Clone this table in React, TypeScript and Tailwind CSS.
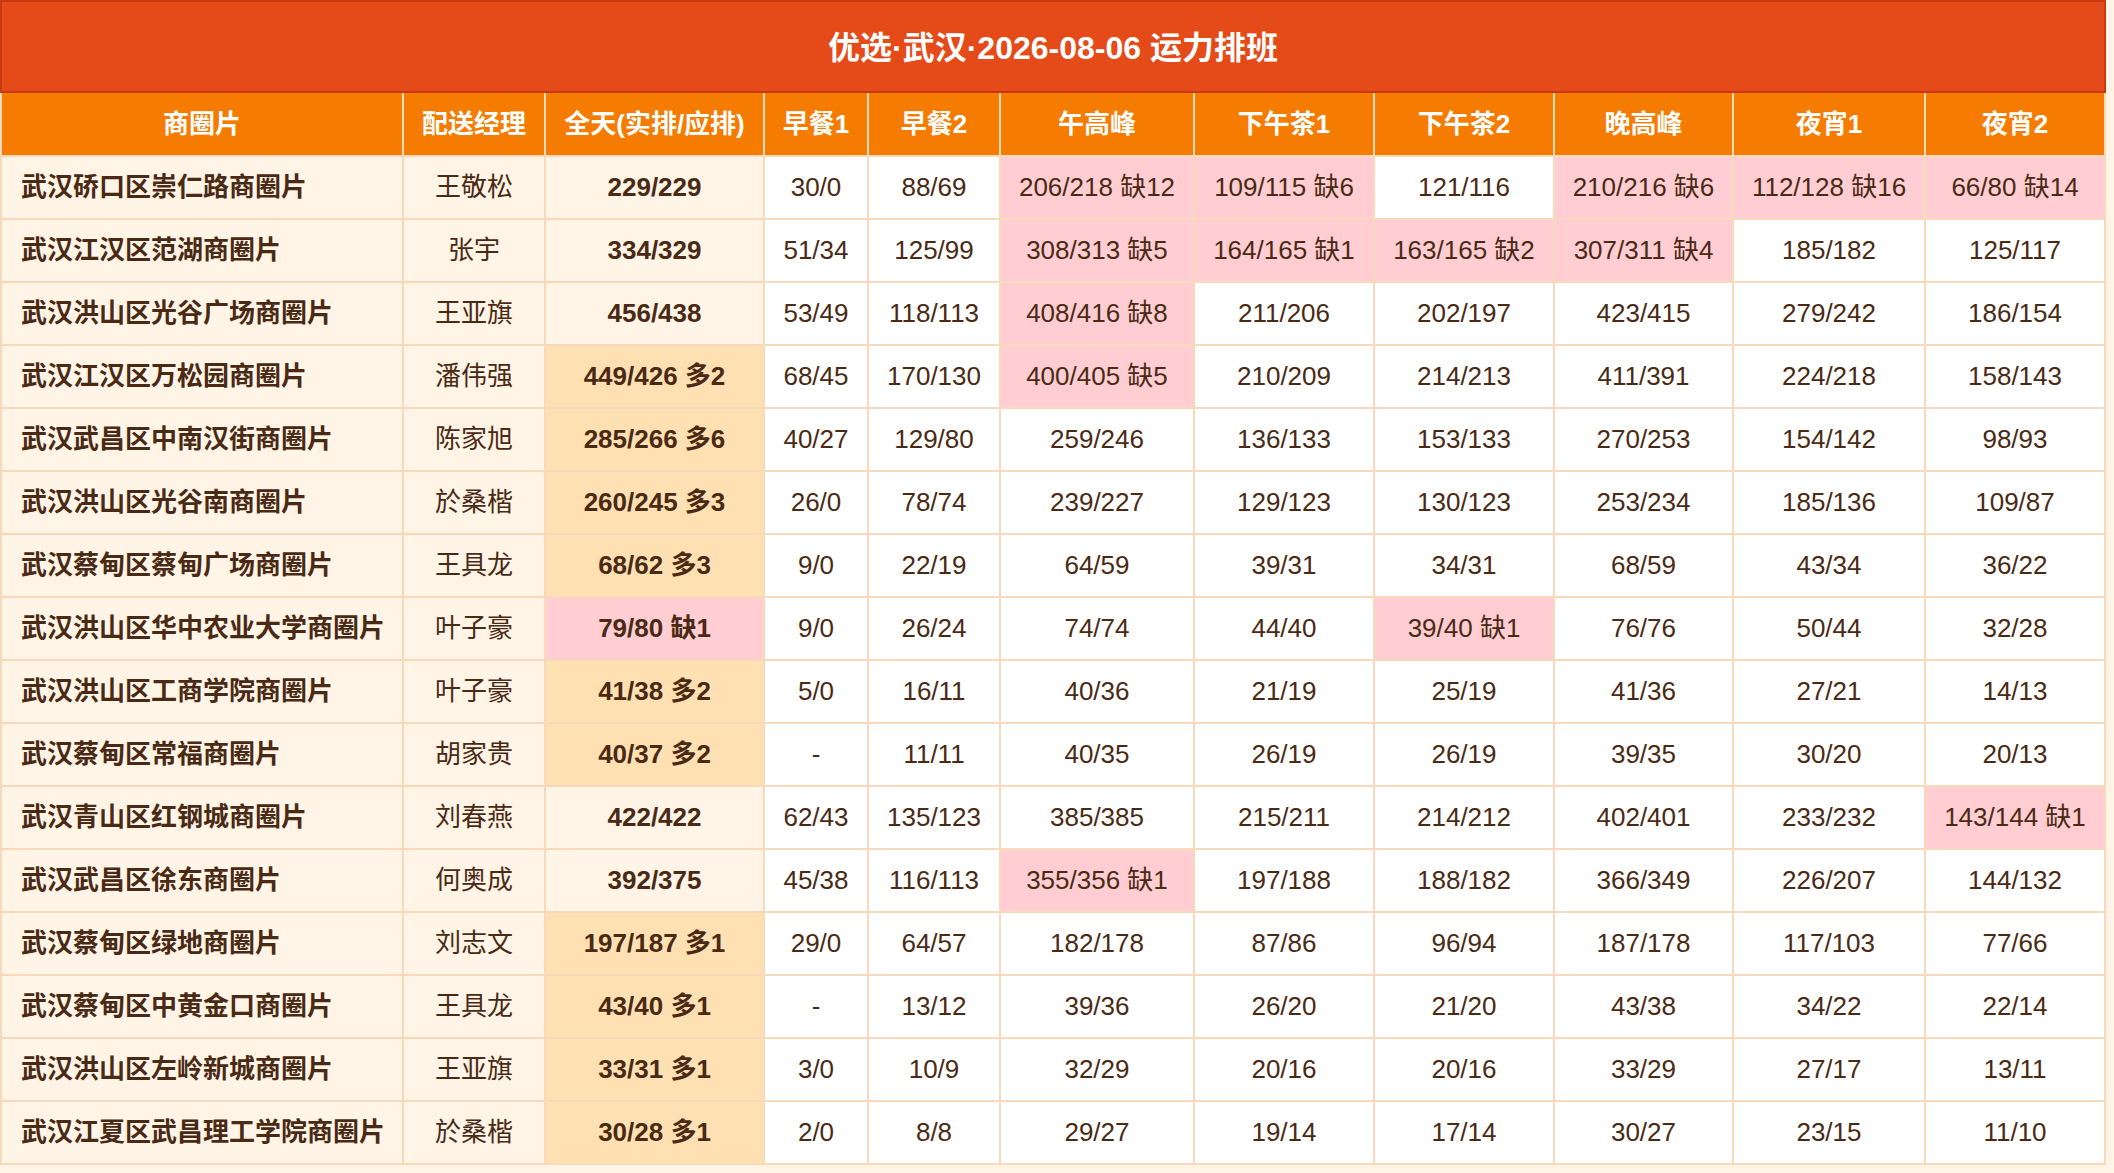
import React from "react";

type Tone = "plain" | "short" | "over";

interface Cell {
  text: string;
  tone?: Tone;
}

interface Row {
  area: string;
  manager: string;
  total: Cell;
  slots: Cell[];
}

const headers = [
  "商圈片",
  "配送经理",
  "全天(实排/应排)",
  "早餐1",
  "早餐2",
  "午高峰",
  "下午茶1",
  "下午茶2",
  "晚高峰",
  "夜宵1",
  "夜宵2",
];

// "缺" -> short (pink), "多" -> over (peach), anything else plain
const c = (text: string): Cell => ({
  text,
  tone: text.includes("缺") ? "short" : text.includes("多") ? "over" : "plain",
});

const rows: Row[] = [
  { area: "武汉硚口区崇仁路商圈片", manager: "王敬松", total: c("229/229"), slots: ["30/0", "88/69", "206/218 缺12", "109/115 缺6", "121/116", "210/216 缺6", "112/128 缺16", "66/80 缺14"].map(c) },
  { area: "武汉江汉区范湖商圈片", manager: "张宇", total: c("334/329"), slots: ["51/34", "125/99", "308/313 缺5", "164/165 缺1", "163/165 缺2", "307/311 缺4", "185/182", "125/117"].map(c) },
  { area: "武汉洪山区光谷广场商圈片", manager: "王亚旗", total: c("456/438"), slots: ["53/49", "118/113", "408/416 缺8", "211/206", "202/197", "423/415", "279/242", "186/154"].map(c) },
  { area: "武汉江汉区万松园商圈片", manager: "潘伟强", total: c("449/426 多2"), slots: ["68/45", "170/130", "400/405 缺5", "210/209", "214/213", "411/391", "224/218", "158/143"].map(c) },
  { area: "武汉武昌区中南汉街商圈片", manager: "陈家旭", total: c("285/266 多6"), slots: ["40/27", "129/80", "259/246", "136/133", "153/133", "270/253", "154/142", "98/93"].map(c) },
  { area: "武汉洪山区光谷南商圈片", manager: "於桑楷", total: c("260/245 多3"), slots: ["26/0", "78/74", "239/227", "129/123", "130/123", "253/234", "185/136", "109/87"].map(c) },
  { area: "武汉蔡甸区蔡甸广场商圈片", manager: "王具龙", total: c("68/62 多3"), slots: ["9/0", "22/19", "64/59", "39/31", "34/31", "68/59", "43/34", "36/22"].map(c) },
  { area: "武汉洪山区华中农业大学商圈片", manager: "叶子豪", total: c("79/80 缺1"), slots: ["9/0", "26/24", "74/74", "44/40", "39/40 缺1", "76/76", "50/44", "32/28"].map(c) },
  { area: "武汉洪山区工商学院商圈片", manager: "叶子豪", total: c("41/38 多2"), slots: ["5/0", "16/11", "40/36", "21/19", "25/19", "41/36", "27/21", "14/13"].map(c) },
  { area: "武汉蔡甸区常福商圈片", manager: "胡家贵", total: c("40/37 多2"), slots: ["-", "11/11", "40/35", "26/19", "26/19", "39/35", "30/20", "20/13"].map(c) },
  { area: "武汉青山区红钢城商圈片", manager: "刘春燕", total: c("422/422"), slots: ["62/43", "135/123", "385/385", "215/211", "214/212", "402/401", "233/232", "143/144 缺1"].map(c) },
  { area: "武汉武昌区徐东商圈片", manager: "何奥成", total: c("392/375"), slots: ["45/38", "116/113", "355/356 缺1", "197/188", "188/182", "366/349", "226/207", "144/132"].map(c) },
  { area: "武汉蔡甸区绿地商圈片", manager: "刘志文", total: c("197/187 多1"), slots: ["29/0", "64/57", "182/178", "87/86", "96/94", "187/178", "117/103", "77/66"].map(c) },
  { area: "武汉蔡甸区中黄金口商圈片", manager: "王具龙", total: c("43/40 多1"), slots: ["-", "13/12", "39/36", "26/20", "21/20", "43/38", "34/22", "22/14"].map(c) },
  { area: "武汉洪山区左岭新城商圈片", manager: "王亚旗", total: c("33/31 多1"), slots: ["3/0", "10/9", "32/29", "20/16", "20/16", "33/29", "27/17", "13/11"].map(c) },
  { area: "武汉江夏区武昌理工学院商圈片", manager: "於桑楷", total: c("30/28 多1"), slots: ["2/0", "8/8", "29/27", "19/14", "17/14", "30/27", "23/15", "11/10"].map(c) },
];

const totalBg: Record<Tone, string> = {
  plain: "bg-[#fff4e6]",
  short: "bg-[#ffcdd2]",
  over: "bg-[#ffe0b2]",
};

const slotBg: Record<Tone, string> = {
  plain: "bg-white",
  short: "bg-[#ffcdd2]",
  over: "bg-[#ffe0b2]",
};

export default function App() {
  return (
    <div
      className="min-h-screen bg-[#fff4e6] text-[#4a2a14]"
      style={{ fontFamily: '"Liberation Sans", "Noto Sans CJK SC", sans-serif' }}
    >
      <div className="w-[2106px]">
        <div className="flex h-[93px] items-center justify-center border-2 border-[#c8390f] bg-[#e54a19] pt-[3px] text-[32px] font-bold text-white">
          优选·武汉·2026-08-06 运力排班
        </div>

        <div className="grid grid-cols-[400px_140px_217px_102px_130px_192px_178px_178px_177px_190px_178px] gap-[2px] bg-[#f7dabb] px-[2px] pb-[2px]">
          {headers.map((h) => (
            <div
              key={h}
              className="flex h-[62px] items-center justify-center whitespace-nowrap bg-[#f57c00] text-[26px] font-bold text-white"
            >
              {h}
            </div>
          ))}

          {rows.map((row) => (
            <React.Fragment key={row.area}>
              <div className="flex h-[61px] items-center whitespace-nowrap bg-[#fff4e6] pl-[19px] text-[26px] font-bold">
                {row.area}
              </div>
              <div className="flex h-[61px] items-center justify-center bg-[#fff4e6] text-[26px]">
                {row.manager}
              </div>
              <div
                className={`flex h-[61px] items-center justify-center whitespace-nowrap text-[26px] font-bold ${totalBg[row.total.tone ?? "plain"]}`}
              >
                {row.total.text}
              </div>
              {row.slots.map((s, i) => (
                <div
                  key={i}
                  className={`flex h-[61px] items-center justify-center whitespace-nowrap text-[26px] ${slotBg[s.tone ?? "plain"]}`}
                >
                  {s.text}
                </div>
              ))}
            </React.Fragment>
          ))}
        </div>
      </div>
    </div>
  );
}
